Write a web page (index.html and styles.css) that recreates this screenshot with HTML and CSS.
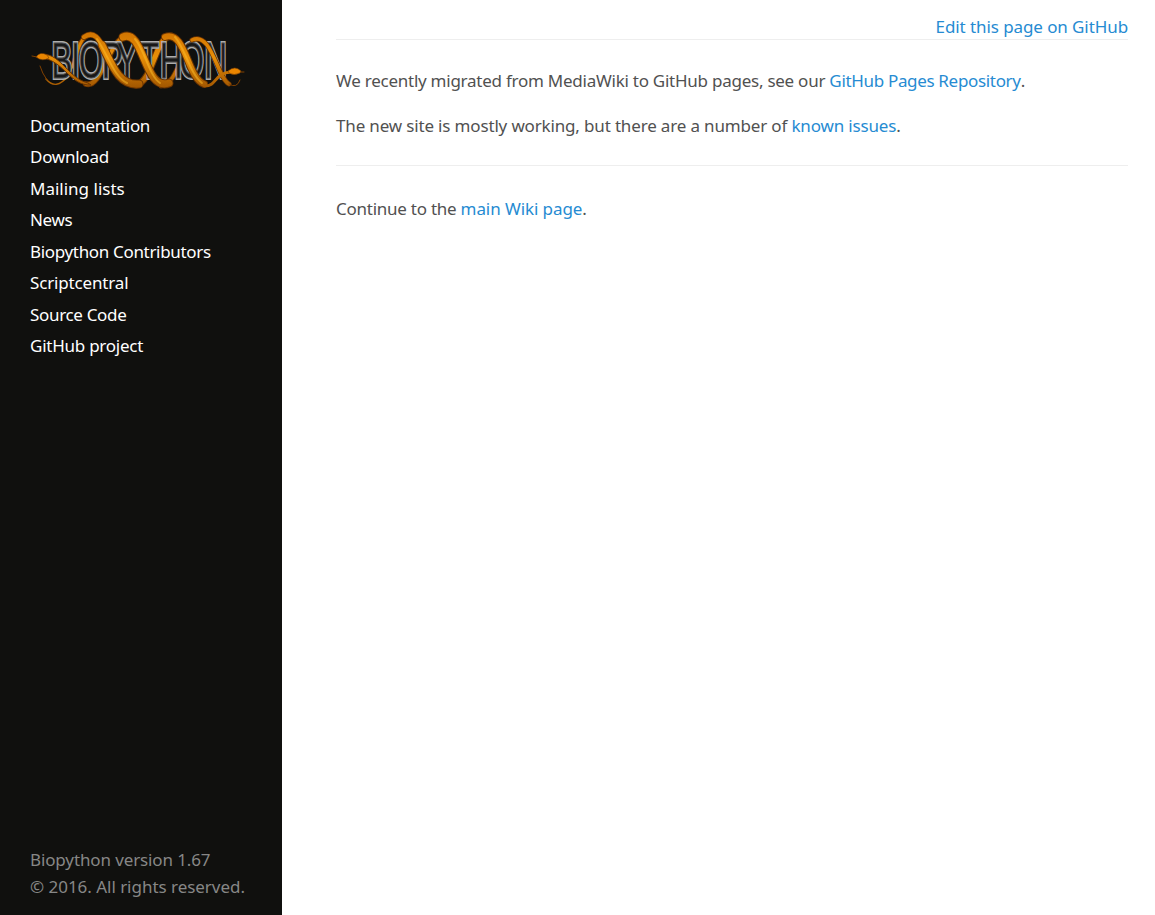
FILE: index.html
```html
<!DOCTYPE html>
<html lang="en">
<head>
<meta charset="utf-8">
<title>Biopython</title>
<link rel="stylesheet" href="styles.css">
</head>
<body>
<div class="layout">
  <aside class="sidebar">
    <a class="logo">
      <svg viewBox="30 24 220 72" width="220" height="72" role="img" aria-label="Biopython">
        <defs>
          <linearGradient id="gold" x1="0" y1="30" x2="0" y2="90" gradientUnits="userSpaceOnUse">
            <stop offset="0" stop-color="#cf7200"/><stop offset=".45" stop-color="#e88f08"/><stop offset="1" stop-color="#9c5200"/>
          </linearGradient>
        </defs>
        <!-- rising strands, behind the lettering -->
        <g class="strand dark">
          <path stroke-width="5" d="M73 66C77 53 80 36 90 35"/>
          <path stroke-width="6" d="M86 84C102 89 109 37 128 36"/>
          <path stroke-width="7" d="M136 85C153 82 155 37 171 36"/>
          <path stroke-width="5" d="M161 86C180 83 181 41 198 39"/>
        </g>
        <g class="strand gold">
          <path stroke-width="1.3" d="M46 79Q56 91 68 76L74 64"/>
          <path stroke-width="3" d="M73 66C77 53 80 36 90 35"/>
          <path stroke-width="4" d="M86 84C102 89 109 37 128 36"/>
          <path stroke-width="5" d="M136 85C153 82 155 37 171 36"/>
          <path stroke-width="3.5" d="M161 86C180 83 181 41 198 39"/>
        </g>
        <g class="letters" transform="scale(.62 1)">
          <text class="letter-edge" x="83 115 127.5 164.5 188.5 226 258 290 330" y="78">BIOPYTHON</text>
          <text class="letter-core" x="83 115 127.5 164.5 188.5 226 258 290 330" y="78" aria-hidden="true">BIOPYTHON</text>
        </g>
        <!-- falling strands, in front -->
        <path class="fall" d="M43 54C62 55 68 78 88 83L91 85C70 86 65 62 43 58Z"/>
        <g class="strand fall-edge">
          <path stroke-width="6" d="M84 37C94 30 99 39 105 50"/>
          <path stroke-width="9" d="M102 45C112 65 119 86 139 84"/>
          <path stroke-width="9" d="M123 37C144 28 144 92 169 83"/>
          <path stroke-width="8" d="M165 37C186 30 187 78 204 84"/>
          <path stroke-width="5" d="M192 40C212 31 217 78 229 84"/>
        </g>
        <g class="strand gold">
          <path stroke-width="4.5" d="M84 37C94 30 99 39 105 50"/>
          <path stroke-width="7" d="M102 45C112 65 119 86 139 84"/>
          <path stroke-width="7" d="M123 37C144 28 144 92 169 83"/>
          <path stroke-width="6" d="M165 37C186 30 187 78 204 84"/>
          <path stroke-width="3.5" d="M192 40C212 31 217 78 229 84"/>
        </g>
        <g class="strand shine">
          <path d="M97 39C108 55 114 77 127 83"/>
          <path d="M135 39C145 50 149 76 160 83"/>
          <path d="M175 37C185 48 190 74 202 83"/>
        </g>
        <path class="strand gold" stroke-width="3" d="M205 86C217 86 214 73 231 72"/>
        <path class="strand tongue" d="M40 66Q42 73 47 80M229 84Q237 89 240 80"/>
        <path class="head" d="M36 57Q40 51 47 55L49 58Q42 62 36 57ZM228 71Q235 65 241 71L240 73Q234 76 229 73Z"/>
        <path class="strand tongue" d="M32 56L37 57M241 72L244 72"/>
      </svg>
    </a>
    <nav class="nav">
      <a class="tight">Documentation</a>
      <a class="snug">Download</a>
      <a>Mailing lists</a>
      <a class="tight">News</a>
      <a class="tight">Biopython Contributors</a>
      <a class="close">Scriptcentral</a>
      <a class="tight">Source Code</a>
      <a class="snug">GitHub project</a>
    </nav>
    <footer class="footer"><div class="version">Biopython version 1.67</div><div class="copyright">© 2016. All rights reserved.</div></footer>
  </aside>
  <main class="content">
    <div class="edit"><a class="link">Edit this page on GitHub</a></div>
    <p class="snug">We recently migrated from MediaWiki to GitHub pages, see our <a class="link tight">GitHub Pages Repository</a>.</p>
    <p class="close">The new site is mostly working, but there are a number of <a class="link">known issues</a>.</p>
    <hr class="rule">
    <p class="snug">Continue to the <a class="link continue">main Wiki page</a>.</p>
  </main>
</div>
</body>
</html>
```
FILE: styles.css
```css
* { box-sizing: border-box; }
body { margin: 0; background: #fff; font: 17px/27px "Noto Sans", sans-serif; color: #515151; }
.layout { display: flex; height: 915px; }
.sidebar { width: 282px; padding: 24px 30px 15px; background: #10100e; display: flex; flex-direction: column; }
.logo { display: block; height: 72px; }
.logo svg { display: block; }
.nav { display: flex; flex-direction: column; margin-top: 13.5px; line-height: 31.5px; color: #fff; white-space: nowrap; }
.tight { letter-spacing: -.33px; }
.snug { letter-spacing: -.25px; }
.close { letter-spacing: -.16px; }
.footer { margin-top: auto; color: #878786; white-space: nowrap; }
.version { letter-spacing: -.12px; }
.copyright { letter-spacing: -.03px; }
.content { flex: 1; padding: 13px 27px 0 54px; }
.content p { margin: 0 0 18px; white-space: nowrap; }
.edit { height: 27px; text-align: right; border-bottom: 1px solid #eee; margin-bottom: 27px; letter-spacing: -.09px; }
.link { color: #268bd2; }
.continue { letter-spacing: -.08px; }
.rule { border: 0; border-top: 1px solid #eee; margin: 26px 0 29px; }

.strand { fill: none; stroke-linecap: round; }
.dark { stroke: #6d3500; }
.gold { stroke: url(#gold); }
.fall-edge { stroke: #6b3400; }
.shine { stroke: #ffc02b; stroke-width: 2; opacity: .5; }
.tongue { stroke: #804000; stroke-width: 1; }
.fall { fill: url(#gold); stroke: #6b3400; stroke-width: 1; }
.head { fill: #e98500; stroke: #7b3e00; stroke-width: .6; }
.letters { font: 50px "Liberation Sans", sans-serif; }
.letter-edge { fill: none; stroke: #adadad; stroke-width: 4; }
.letter-core { fill: #181818; stroke: #4c4c4c; stroke-width: 1; }
```
